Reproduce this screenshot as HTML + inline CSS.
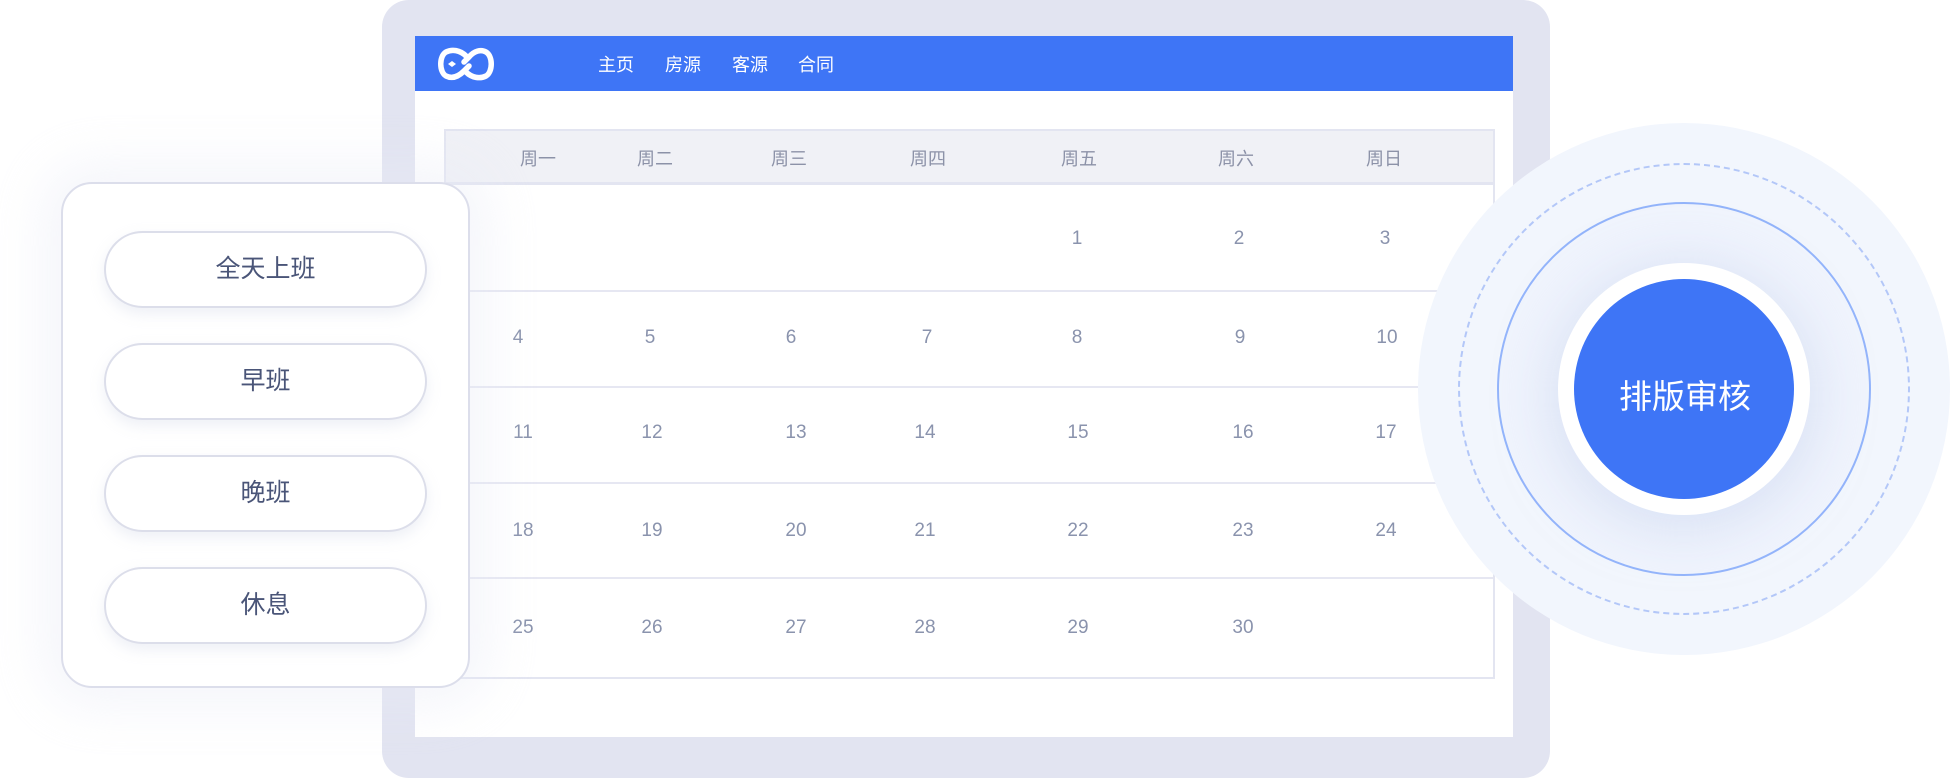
<!DOCTYPE html>
<html><head><meta charset="utf-8"><style>
*{margin:0;padding:0;box-sizing:border-box}
body{width:1950px;height:778px;background:#fff;position:relative;overflow:hidden;font-family:"Liberation Sans","Noto Sans CJK SC",sans-serif}
.a{position:absolute}
.frame{left:382px;top:0;width:1168px;height:778px;background:#e2e4f1;border-radius:27px}
.screen{left:415px;top:36px;width:1098px;height:701px;background:#fff}
.nav{left:415px;top:36px;width:1098px;height:55px;background:#3e75f6}
.nav span{position:absolute;top:15px;color:#fff;font-size:18px}
.table{left:444px;top:129px;width:1051px;height:550px;border:2px solid #e3e5f1;background:#fff}
.head{left:446px;top:131px;width:1047px;height:54px;background:#f0f1f6;border-bottom:3px solid #e3e5f1}
.hl{left:446px;width:1047px;height:2px;background:#e6e7f2}
.t{position:absolute;transform:translate(-50%,-50%);white-space:nowrap}
.h{color:#8c92a8;font-size:18px}
.n{color:#8a93ad;font-size:19px}
.panel{left:61px;top:182px;width:409px;height:506px;background:#fff;border:2px solid #dcdeeb;border-radius:31px;box-shadow:0 0 50px 20px rgba(232,234,246,.45)}
.btn{position:absolute;left:104px;width:323px;height:77px;border:2px solid #dcdeea;border-radius:39px;background:#fff;box-shadow:0 6px 14px rgba(200,205,225,.3);color:#4a5578;font-size:25px;text-align:center;line-height:73px}
.c{position:absolute;border-radius:50%;transform:translate(-50%,-50%);left:1684px;top:389px}
</style></head><body>
<div class="a frame"></div>
<div class="a screen"></div>
<div class="a nav">
<svg class="a" style="left:21px;top:11px" width="58" height="34" viewBox="0 0 58 34"><path d="M30 9 C24 3 16 2 10 5 C3 9 3 25 10 29 C16 32 22 30 28 24 L33 19 M28 15 L33 10 C38 4 45 2 50 5 C57 9 57 25 50 29 C44 32 36 31 30 25" fill="none" stroke="#fff" stroke-width="5.5" stroke-linecap="round"/><path d="M12 17 l4 -3 l4 3 l-4 3z" fill="#fff"/></svg>
<span style="left:183px">主页</span><span style="left:250px">房源</span><span style="left:317px">客源</span><span style="left:383px">合同</span>
</div>
<div class="a table"></div>
<div class="a head"></div>
<div class="a hl" style="top:290px"></div>
<div class="a hl" style="top:386px"></div>
<div class="a hl" style="top:482px"></div>
<div class="a hl" style="top:577px"></div>
<div class="a" style="left:0;top:0">
<span class="t h" style="left:538px;top:158px">周一</span>
<span class="t h" style="left:655px;top:158px">周二</span>
<span class="t h" style="left:789px;top:158px">周三</span>
<span class="t h" style="left:928px;top:158px">周四</span>
<span class="t h" style="left:1079px;top:158px">周五</span>
<span class="t h" style="left:1236px;top:158px">周六</span>
<span class="t h" style="left:1384px;top:158px">周日</span>

<span class="t n" style="left:1077px;top:239px">1</span>
<span class="t n" style="left:1239px;top:239px">2</span>
<span class="t n" style="left:1385px;top:239px">3</span>

<span class="t n" style="left:518px;top:338px">4</span>
<span class="t n" style="left:650px;top:338px">5</span>
<span class="t n" style="left:791px;top:338px">6</span>
<span class="t n" style="left:927px;top:338px">7</span>
<span class="t n" style="left:1077px;top:338px">8</span>
<span class="t n" style="left:1240px;top:338px">9</span>
<span class="t n" style="left:1387px;top:338px">10</span>

<span class="t n" style="left:523px;top:433px">11</span>
<span class="t n" style="left:652px;top:433px">12</span>
<span class="t n" style="left:796px;top:433px">13</span>
<span class="t n" style="left:925px;top:433px">14</span>
<span class="t n" style="left:1078px;top:433px">15</span>
<span class="t n" style="left:1243px;top:433px">16</span>
<span class="t n" style="left:1386px;top:433px">17</span>

<span class="t n" style="left:523px;top:531px">18</span>
<span class="t n" style="left:652px;top:531px">19</span>
<span class="t n" style="left:796px;top:531px">20</span>
<span class="t n" style="left:925px;top:531px">21</span>
<span class="t n" style="left:1078px;top:531px">22</span>
<span class="t n" style="left:1243px;top:531px">23</span>
<span class="t n" style="left:1386px;top:531px">24</span>

<span class="t n" style="left:523px;top:628px">25</span>
<span class="t n" style="left:652px;top:628px">26</span>
<span class="t n" style="left:796px;top:628px">27</span>
<span class="t n" style="left:925px;top:628px">28</span>
<span class="t n" style="left:1078px;top:628px">29</span>
<span class="t n" style="left:1243px;top:628px">30</span>
</div>
<div class="a panel"></div>
<div class="btn" style="top:231px">全天上班</div>
<div class="btn" style="top:343px">早班</div>
<div class="btn" style="top:455px">晚班</div>
<div class="btn" style="top:567px">休息</div>

<div class="c" style="width:532px;height:532px;background:#f2f6fd"></div>
<div class="c" style="width:452px;height:452px;border:2px dashed #b3c7f8"></div>
<div class="c" style="width:374px;height:374px;border:2px solid #93b4fb;background:#f0f4fd"></div>
<div class="c" style="width:252px;height:252px;background:#fff;box-shadow:0 8px 50px 10px rgba(200,212,240,.5)"></div>
<div class="c" style="width:220px;height:220px;background:#3e75f6"></div>
<span class="t" style="left:1685px;top:394px;color:#fff;font-size:33px">排版审核</span>
</body></html>
